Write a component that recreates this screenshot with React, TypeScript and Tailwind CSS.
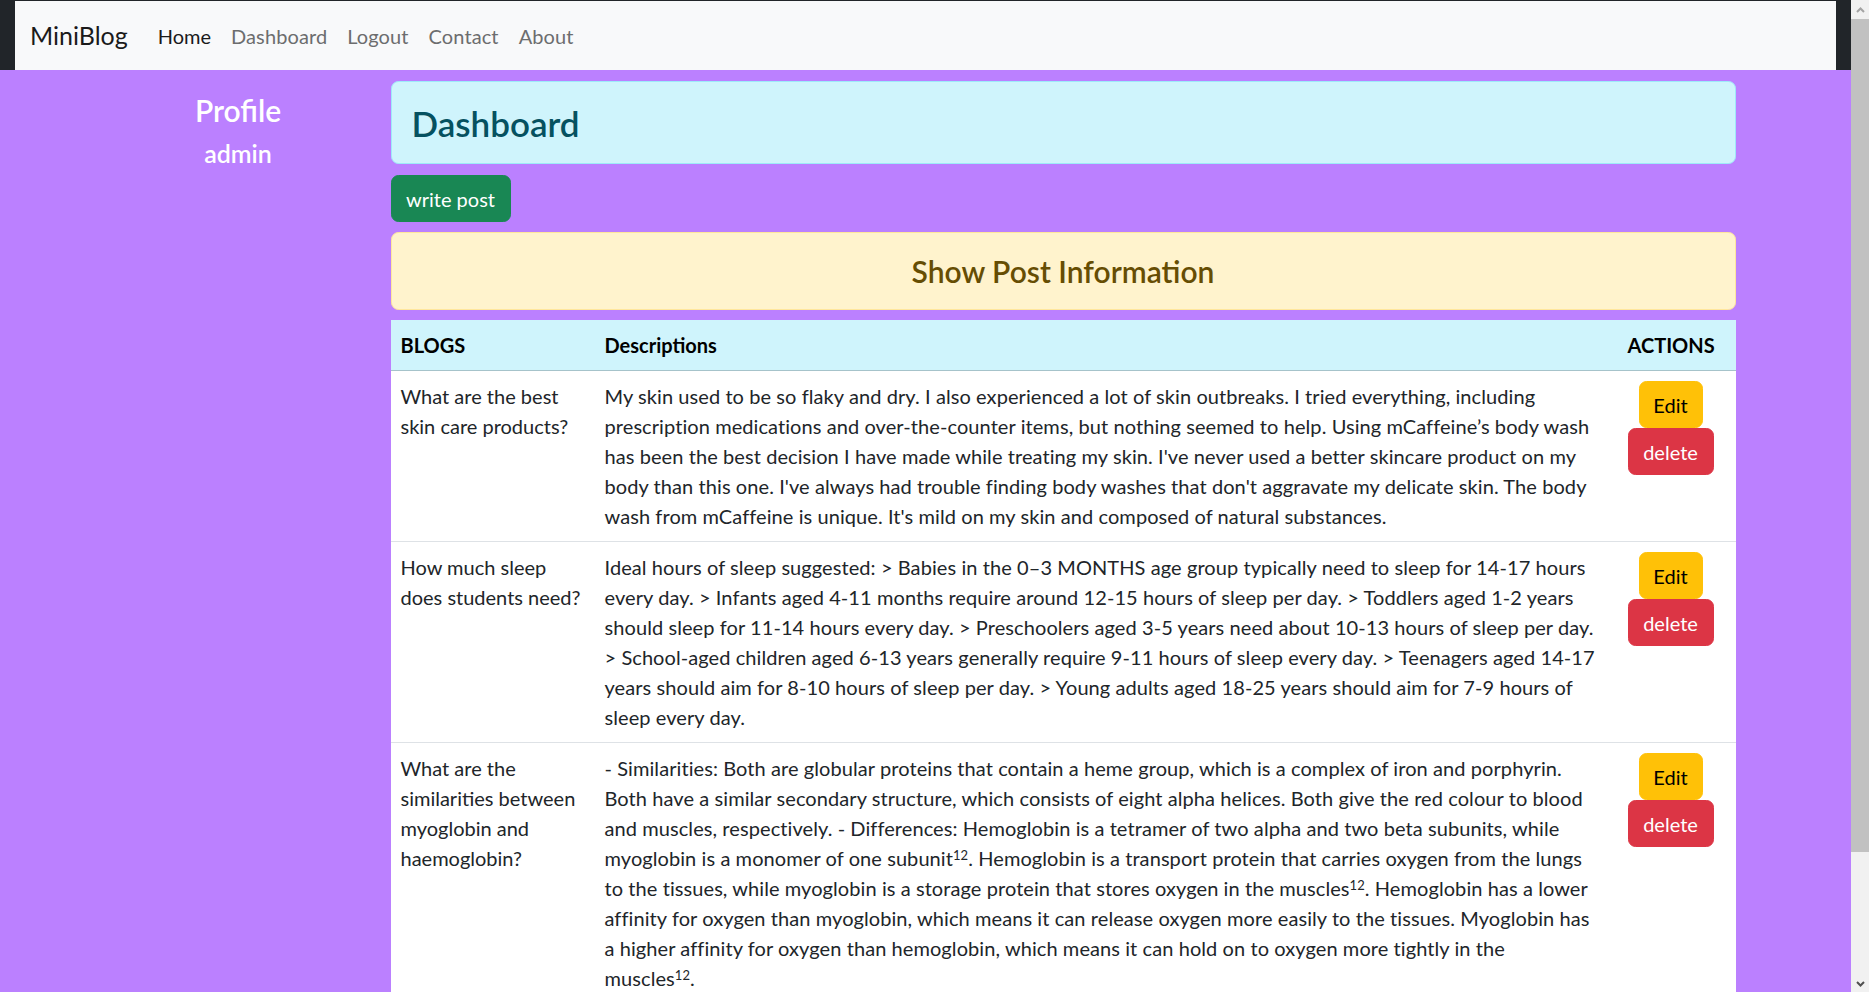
import React from "react";

type Row = { title: string[]; desc: React.ReactNode[] };

const Sup = () => <sup className="text-[13px]">12</sup>;

const rows: Row[] = [
  {
    title: ["What are the best", "skin care products?"],
    desc: [
      "My skin used to be so flaky and dry. I also experienced a lot of skin outbreaks. I tried everything, including",
      "prescription medications and over-the-counter items, but nothing seemed to help. Using mCaffeine\u2019s body wash",
      "has been the best decision I have made while treating my skin. I've never used a better skincare product on my",
      "body than this one. I've always had trouble finding body washes that don't aggravate my delicate skin. The body",
      "wash from mCaffeine is unique. It's mild on my skin and composed of natural substances.",
    ],
  },
  {
    title: ["How much sleep", "does students need?"],
    desc: [
      "Ideal hours of sleep suggested: > Babies in the 0\u20133 MONTHS age group typically need to sleep for 14-17 hours",
      "every day. > Infants aged 4-11 months require around 12-15 hours of sleep per day. > Toddlers aged 1-2 years",
      "should sleep for 11-14 hours every day. > Preschoolers aged 3-5 years need about 10-13 hours of sleep per day.",
      "> School-aged children aged 6-13 years generally require 9-11 hours of sleep every day. > Teenagers aged 14-17",
      "years should aim for 8-10 hours of sleep per day. > Young adults aged 18-25 years should aim for 7-9 hours of",
      "sleep every day.",
    ],
  },
  {
    title: ["What are the", "similarities between", "myoglobin and", "haemoglobin?"],
    desc: [
      "- Similarities: Both are globular proteins that contain a heme group, which is a complex of iron and porphyrin.",
      "Both have a similar secondary structure, which consists of eight alpha helices. Both give the red colour to blood",
      "and muscles, respectively. - Differences: Hemoglobin is a tetramer of two alpha and two beta subunits, while",
      <>
        myoglobin is a monomer of one subunit<Sup />. Hemoglobin is a transport protein that carries oxygen from the lungs
      </>,
      <>
        to the tissues, while myoglobin is a storage protein that stores oxygen in the muscles<Sup />. Hemoglobin has a lower
      </>,
      "affinity for oxygen than myoglobin, which means it can release oxygen more easily to the tissues. Myoglobin has",
      "a higher affinity for oxygen than hemoglobin, which means it can hold on to oxygen more tightly in the",
      <>
        muscles<Sup />.
      </>,
    ],
  },
];

function Chevron({ up, color }: { up: boolean; color: string }) {
  return (
    <svg width="9" height="6" viewBox="0 0 9 6">
      <polyline
        points={up ? "1,5 4.5,1.5 8,5" : "1,1 4.5,4.5 8,1"}
        fill="none"
        stroke={color}
        strokeWidth="2"
      />
    </svg>
  );
}

export default function App() {
  return (
    <div className="h-[992px] w-full flex overflow-hidden font-['Lato','Liberation_Sans',sans-serif] text-[20px] leading-[30px] text-[#212529]">
      <div className="flex-1 min-w-0 flex flex-col bg-[#bb80ff]">
        {/* Navbar */}
        <div className="bg-[#212529] pt-px px-[15px]">
          <nav className="h-[69px] bg-[#f8f9fa] flex items-center px-[15px]">
            <span className="text-[25px] leading-[37px] text-[#1a1a1a] mr-[20px]">MiniBlog</span>
            <a className="px-[10px] text-[#1a1a1a]">Home</a>
            <a className="px-[10px] text-[#6c6d6e] tracking-[0.1px]">Dashboard</a>
            <a className="px-[10px] text-[#6c6d6e] tracking-[0.1px]">Logout</a>
            <a className="px-[10px] text-[#6c6d6e] tracking-[0.1px]">Contact</a>
            <a className="px-[10px] text-[#6c6d6e] tracking-[0.1px]">About</a>
          </nav>
        </div>

        {/* Container */}
        <div className="w-[1650px] mx-auto flex">
          <aside className="w-[275px] px-[15px] pt-[22px] text-center text-white">
            <h4 className="text-[30px] leading-[36px] font-semibold mb-[10px]">Profile</h4>
            <h5 className="text-[25px] leading-[30px] font-semibold">admin</h5>
          </aside>

          <main className="w-[1375px] px-[15px] pt-[11px]">
            <div className="border border-[#9eeaf9] bg-[#cff4fc] rounded-[7.5px] px-[20px] pt-[20px] pb-[19px]">
              <h3 className="text-[35px] leading-[42px] font-semibold text-[#055160]">Dashboard</h3>
            </div>

            <button className="mt-[11px] h-[47px] w-[120px] rounded-[7.5px] bg-[#198754] border border-[#198754] text-white text-[20px] leading-[30px]">
              write post
            </button>

            <div className="mt-[10px] border border-[#ffe69c] bg-[#fff3cd] rounded-[7.5px] px-[20px] py-[20px] text-center">
              <h4 className="text-[30px] leading-[36px] font-semibold text-[#664d03]">Show Post Information</h4>
            </div>

            <table className="mt-[10px] w-[1345px] table-fixed border-collapse bg-white">
              <colgroup>
                <col className="w-[204px]" />
                <col className="w-[1023px]" />
                <col className="w-[118px]" />
              </colgroup>
              <thead>
                <tr className="bg-[#cff4fc] text-black">
                  <th className="text-left font-bold px-[10px] py-[10px] border-b border-[#a6c3ca]">BLOGS</th>
                  <th className="text-left font-bold px-[10px] py-[10px] border-b border-[#a6c3ca]">Descriptions</th>
                  <th className="text-left font-bold pl-[10px] pr-[8px] py-[10px] border-b border-[#a6c3ca] whitespace-nowrap">ACTIONS</th>
                </tr>
              </thead>
              <tbody>
                {rows.map((r, i) => (
                  <tr key={i} className="border-b border-[#dee2e6] align-top">
                    <td className="px-[10px] py-[10px]">
                      {r.title.map((t, j) => (
                        <div key={j} className="whitespace-nowrap">{t}</div>
                      ))}
                    </td>
                    <td className="px-[10px] py-[10px]">
                      {r.desc.map((d, j) => (
                        <div key={j} className="whitespace-nowrap tracking-[0.08px]">{d}</div>
                      ))}
                    </td>
                    <td className="pl-[10px] pr-[22px] py-[10px]">
                      <div className="w-[86px] flex flex-col items-center">
                        <button className="w-[64px] h-[47px] rounded-[7.5px] bg-[#ffc107] border border-[#ffc107] text-black text-[20px] leading-[30px]">
                          Edit
                        </button>
                        <button className="w-[86px] h-[47px] rounded-[7.5px] bg-[#dc3545] border border-[#dc3545] text-white text-[20px] leading-[30px]">
                          delete
                        </button>
                      </div>
                    </td>
                  </tr>
                ))}
              </tbody>
            </table>
          </main>
        </div>
      </div>

      {/* Scrollbar */}
      <div className="w-[18px] bg-[#f1f1f1] flex flex-col">
        <div className="h-[19px] flex items-center justify-center">
          <Chevron up color="#a3a3a3" />
        </div>
        <div className="h-[833px] bg-[#c1c1c1]" />
        <div className="flex-1" />
        <div className="h-[17px] flex items-center justify-center">
          <Chevron up={false} color="#505050" />
        </div>
      </div>
    </div>
  );
}
